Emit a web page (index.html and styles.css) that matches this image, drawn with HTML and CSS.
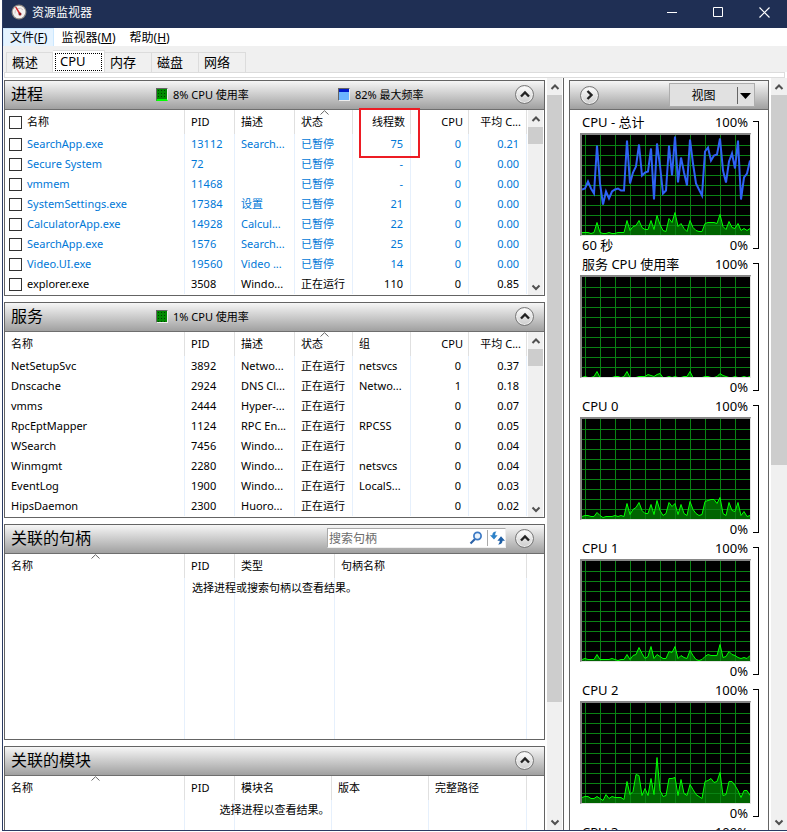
FILE: index.html
```
<!DOCTYPE html>
<html lang="zh-CN">
<head>
  <meta charset="UTF-8" />
  <meta name="viewport" content="width=device-width, initial-scale=1.0"/>
  <title>资源监视器</title>
  <link rel="stylesheet" href="styles.css">
</head>
<body>
  <svg class="defs" width="0" height="0">
    <symbol id="up" viewBox="0 0 10 10"><path d="M1.5 7 5 3.5 8.500 7" fill="none" stroke="#505050" stroke-width="2"/></symbol>
    <symbol id="down" viewBox="0 0 10 10"><path d="M1.500 3.500 5 7 8.500 3.500" fill="none" stroke="#505050" stroke-width="2"/></symbol>
    <symbol id="sort" viewBox="0 0 9 5"><path d="M.5 4.500 4.500.7 8.500 4.500" fill="none" stroke="#666"/></symbol>
    <symbol id="chevron" viewBox="0 0 10 10"><path d="M1 7.500 5 3.500 9 7.500" fill="none" stroke="#222" stroke-width="2.400"/></symbol>
  </svg>

  <div class="window">
    <header class="titlebar">
      <svg class="app-icon" width="16" height="16" viewBox="0 0 16 16">
        <circle cx="8" cy="8" r="7.500" fill="#8c8782"/>
        <circle cx="8" cy="8" r="6.300" fill="#f4f1ef"/>
        <path d="M4 9.500A4.500 4.500 0 0 1 12 6" fill="none" stroke="#cfc6c0"/>
        <path d="M4 3 5.500 3 10 10 8.500 11z" fill="#d2232a"/>
        <circle cx="9" cy="10" r="1.500" fill="#8d1b20"/>
      </svg>
      <h1>资源监视器</h1>
      <div class="window-buttons">
        <button aria-label="最小化"><svg width="11" height="11"><path d="M0 5.500H10" stroke="#fff"/></svg></button>
        <button aria-label="最大化"><svg width="11" height="11"><path d="M.5.5H9.500V9.500H.5z" fill="none" stroke="#fff"/></svg></button>
        <button aria-label="关闭"><svg width="11" height="11"><path d="M.5.5 10.500 10.500M10.500.5.5 10.500" stroke="#fff" stroke-width="1.200"/></svg></button>
      </div>
    </header>

    <nav class="menu">
      <button class="active">文件(<u>F</u>)</button>
      <button>监视器(<u>M</u>)</button>
      <button>帮助(<u>H</u>)</button>
    </nav>

    <div class="tabs" role="tablist">
      <button role="tab">概述</button>
      <button role="tab" class="selected" aria-selected="true"><span>CPU</span></button>
      <button role="tab">内存</button>
      <button role="tab">磁盘</button>
      <button role="tab">网络</button>
    </div>
    <div class="tab-edge"></div>

    <main>
      <div class="panels">
        <section class="panel">
          <div class="panel-header">
            <h2>进程</h2>
            <span class="legend"><i class="swatch green low"></i>8% CPU 使用率</span>
            <span class="legend"><i class="swatch blue"></i>82% 最大频率</span>
            <button class="round" aria-label="折叠"><svg width="10" height="10"><use href="#chevron"/></svg></button>
          </div>
          <div class="list">
            <table>
              <colgroup><col><col class="w50"><col class="w60"><col class="w58"><col class="w58"><col class="w58"><col class="w58"></colgroup>
              <thead>
                <tr><th class="check"><label><input type="checkbox">名称</label></th><th>PID</th><th>描述</th><th>状态<svg class="sort" width="9" height="5"><use href="#sort"/></svg></th><th class="num marked">线程数</th><th class="num">CPU</th><th class="num">平均 C...</th></tr>
              </thead>
              <tbody>
                <tr class="paused"><td class="check"><label><input type="checkbox">SearchApp.exe</label></td><td>13112</td><td>Search...</td><td>已暂停</td><td class="num">75</td><td class="num">0</td><td class="num">0.21</td></tr>
                <tr class="paused"><td class="check"><label><input type="checkbox">Secure System</label></td><td>72</td><td></td><td>已暂停</td><td class="num">-</td><td class="num">0</td><td class="num">0.00</td></tr>
                <tr class="paused"><td class="check"><label><input type="checkbox">vmmem</label></td><td>11468</td><td></td><td>已暂停</td><td class="num">-</td><td class="num">0</td><td class="num">0.00</td></tr>
                <tr class="paused"><td class="check"><label><input type="checkbox">SystemSettings.exe</label></td><td>17384</td><td>设置</td><td>已暂停</td><td class="num">21</td><td class="num">0</td><td class="num">0.00</td></tr>
                <tr class="paused"><td class="check"><label><input type="checkbox">CalculatorApp.exe</label></td><td>14928</td><td>Calcul...</td><td>已暂停</td><td class="num">22</td><td class="num">0</td><td class="num">0.00</td></tr>
                <tr class="paused"><td class="check"><label><input type="checkbox">SearchApp.exe</label></td><td>1576</td><td>Search...</td><td>已暂停</td><td class="num">25</td><td class="num">0</td><td class="num">0.00</td></tr>
                <tr class="paused"><td class="check"><label><input type="checkbox">Video.UI.exe</label></td><td>19560</td><td>Video ...</td><td>已暂停</td><td class="num">14</td><td class="num">0</td><td class="num">0.00</td></tr>
                <tr><td class="check"><label><input type="checkbox">explorer.exe</label></td><td>3508</td><td>Windo...</td><td>正在运行</td><td class="num">110</td><td class="num">0</td><td class="num">0.85</td></tr>
              </tbody>
            </table>
            <div class="scrollbar">
              <button aria-label="向上"><svg width="10" height="10"><use href="#up"/></svg></button>
              <div class="track"><div class="thumb list-thumb"></div></div>
              <button aria-label="向下"><svg width="10" height="10"><use href="#down"/></svg></button>
            </div>
          </div>
        </section>

        <section class="panel">
          <div class="panel-header">
            <h2>服务</h2>
            <span class="legend"><i class="swatch green"></i>1% CPU 使用率</span>
            <button class="round" aria-label="折叠"><svg width="10" height="10"><use href="#chevron"/></svg></button>
          </div>
          <div class="list">
            <table>
              <colgroup><col><col class="w50"><col class="w60"><col class="w58"><col class="w58"><col class="w58"><col class="w58"></colgroup>
              <thead>
                <tr><th>名称</th><th>PID</th><th>描述</th><th>状态<svg class="sort" width="9" height="5"><use href="#sort"/></svg></th><th>组</th><th class="num">CPU</th><th class="num">平均 C...</th></tr>
              </thead>
              <tbody>
                <tr><td>NetSetupSvc</td><td>3892</td><td>Netwo...</td><td>正在运行</td><td>netsvcs</td><td class="num">0</td><td class="num">0.37</td></tr>
                <tr><td>Dnscache</td><td>2924</td><td>DNS Cl...</td><td>正在运行</td><td>Netwo...</td><td class="num">1</td><td class="num">0.18</td></tr>
                <tr><td>vmms</td><td>2444</td><td>Hyper-...</td><td>正在运行</td><td></td><td class="num">0</td><td class="num">0.07</td></tr>
                <tr><td>RpcEptMapper</td><td>1124</td><td>RPC En...</td><td>正在运行</td><td>RPCSS</td><td class="num">0</td><td class="num">0.05</td></tr>
                <tr><td>WSearch</td><td>7456</td><td>Windo...</td><td>正在运行</td><td></td><td class="num">0</td><td class="num">0.04</td></tr>
                <tr><td>Winmgmt</td><td>2280</td><td>Windo...</td><td>正在运行</td><td>netsvcs</td><td class="num">0</td><td class="num">0.04</td></tr>
                <tr><td>EventLog</td><td>1900</td><td>Windo...</td><td>正在运行</td><td>LocalS...</td><td class="num">0</td><td class="num">0.03</td></tr>
                <tr><td>HipsDaemon</td><td>2300</td><td>Huoro...</td><td>正在运行</td><td></td><td class="num">0</td><td class="num">0.02</td></tr>
              </tbody>
            </table>
            <div class="scrollbar">
              <button aria-label="向上"><svg width="10" height="10"><use href="#up"/></svg></button>
              <div class="track"><div class="thumb list-thumb"></div></div>
              <button aria-label="向下"><svg width="10" height="10"><use href="#down"/></svg></button>
            </div>
          </div>
        </section>

        <section class="panel">
          <div class="panel-header">
            <h2>关联的句柄</h2>
            <form class="search">
              <input type="text" placeholder="搜索句柄" aria-label="搜索句柄">
              <button type="button" aria-label="搜索"><svg width="14" height="14" viewBox="0 0 14 14"><path d="M6 8 1.500 12.500" stroke="#2b62a8" stroke-width="2.200"/><circle cx="8.500" cy="5" r="3.600" fill="#eaf3fc" stroke="#3a78c4" stroke-width="1.700"/></svg></button>
              <button type="button" class="refresh" aria-label="刷新"><svg width="15" height="14" viewBox="0 0 15 14"><path d="M6.500.5C3.500.5 2.300 2 2.300 4.300H0L4 8.500 7.600 4.300H5.200C5.200 2.800 5.500 1.500 6.500.5z" fill="#2d82c8"/><path d="M8 13.500C11 13.500 12.500 12 12.500 9.700H15L11 5.300 7.400 9.700H9.800C9.800 11.200 9.200 12.500 8 13.500z" fill="#1f5fa5"/></svg></button>
            </form>
            <button class="round" aria-label="折叠"><svg width="10" height="10"><use href="#chevron"/></svg></button>
          </div>
          <div class="list empty">
            <table>
              <colgroup><col><col class="w50"><col class="w100"><col class="w192"></colgroup>
              <thead>
                <tr><th>名称<svg class="sort" width="9" height="5"><use href="#sort"/></svg></th><th>PID</th><th>类型</th><th>句柄名称</th></tr>
              </thead>
              <tbody><tr><td></td><td></td><td></td><td></td></tr></tbody>
            </table>
            <p>选择进程或搜索句柄以查看结果。</p>
          </div>
        </section>

        <section class="panel">
          <div class="panel-header">
            <h2>关联的模块</h2>
            <button class="round" aria-label="折叠"><svg width="10" height="10"><use href="#chevron"/></svg></button>
          </div>
          <div class="list empty">
            <table>
              <colgroup><col><col class="w50"><col class="w97"><col class="w97"><col class="w98"></colgroup>
              <thead>
                <tr><th>名称<svg class="sort" width="9" height="5"><use href="#sort"/></svg></th><th>PID</th><th>模块名</th><th>版本</th><th>完整路径</th></tr>
              </thead>
              <tbody><tr><td></td><td></td><td></td><td></td><td></td></tr></tbody>
            </table>
            <p>选择进程以查看结果。</p>
          </div>
        </section>
      </div>

      <div class="scrollbar">
        <button aria-label="向上"><svg width="10" height="10"><use href="#up"/></svg></button>
        <div class="track"><div class="thumb panels-thumb"></div></div>
        <button aria-label="向下"><svg width="10" height="10"><use href="#down"/></svg></button>
      </div>

      <aside>
        <div class="panel graphs">
          <div class="panel-header">
            <button class="round right" aria-label="隐藏图表"><svg width="10" height="10"><use href="#chevron"/></svg></button>
            <button class="view"><span>视图</span><svg width="17" height="17"><path d="M.5 0V17" stroke="#666"/><path d="M3 6H14L8.500 12z"/></svg></button>
          </div>
          <div id="charts"></div>
        </div>
        <div class="scrollbar">
          <button aria-label="向上"><svg width="10" height="10"><use href="#up"/></svg></button>
          <div class="track"><div class="thumb graphs-thumb"></div></div>
          <button aria-label="向下"><svg width="10" height="10"><use href="#down"/></svg></button>
        </div>
      </aside>
    </main>
  </div>

  <script src="charts.js"></script>
</body>
</html>
```
FILE: styles.css
```
* {
  box-sizing: border-box;
}
body {
  margin: 0;
  padding-left: 2px;
  background: #fff;
  color: #000;
  font-family: "Noto Sans", "Noto Sans CJK SC", sans-serif;
  font-size: 11px;
}
button, input {
  font-family: inherit;
  color: inherit;
}
button {
  padding: 0;
  border: none;
  background: none;
}
svg {
  display: block;
}
.defs {
  position: absolute;
}
.window {
  display: flex;
  flex-direction: column;
  height: calc(100vh - 1px);
  border-left: 1px solid #2b3b63;
  border-bottom: 1px solid #2b3b63;
  overflow: hidden;
}

/* title bar, menu, tabs */
.titlebar {
  display: flex;
  align-items: center;
  flex: none;
  height: 28px;
  margin-left: -1px;
  padding: 0 0 4px 9px;
  background: #1f2f54;
  color: #fff;
}
.titlebar h1 {
  margin: 0 0 0 5px;
  font-size: 12px;
  font-weight: normal;
}
.window-buttons {
  display: flex;
  margin-left: auto;
}
.window-buttons button {
  display: flex;
  align-items: center;
  justify-content: center;
  width: 46px;
  height: 24px;
}
.menu {
  display: flex;
  flex: none;
  height: 18px;
}
.menu button {
  height: 19px;
  padding: 0 6px;
  border: 1px solid transparent;
  font-size: 12px;
  line-height: 17px;
}
.menu .active {
  background: #e5f3ff;
  border-color: #cce8ff;
}
.tabs {
  display: flex;
  align-items: flex-end;
  flex: none;
  height: 26px;
  padding-left: 3px;
  background: #f0f0f0;
}
.tabs button {
  height: 20px;
  padding: 0 9px 0 5px;
  min-width: 47px;
  border: 1px solid #dcdcdc;
  border-left: none;
  border-bottom: none;
  font-size: 13px;
  line-height: 17px;
  text-align: left;
}
.tabs button:first-child {
  border-left: 1px solid #dcdcdc;
}
.tabs .selected {
  width: 52px;
  height: 22px;
  padding: 2px;
  background: #fff;
}
.tabs .selected span {
  display: block;
  height: 18px;
  padding-left: 4px;
  border: 1px dotted #000;
  line-height: 14px;
}
.tab-edge {
  flex: none;
  height: 6px;
  margin: 0 2px 0 1px;
  border: 1px solid #dcdcdc;
}

/* layout */
main {
  display: flex;
  flex: 1;
  min-height: 0;
}
.panels {
  display: flex;
  flex-direction: column;
  flex: 1;
  gap: 6px;
  min-width: 0;
  padding: 2px 2px 0 1px;
  overflow: hidden;
}
aside {
  display: flex;
  flex: none;
  gap: 2px;
  width: 224px;
  margin-left: 1px;
  padding-left: 5px;
  border-left: 1px solid #646464;
}
.panel {
  flex: none;
  border: 1px solid #646464;
  background: #fff;
}
.panel-header {
  display: flex;
  align-items: center;
  height: 29px;
  padding: 0 10px 2px 6px;
  background: linear-gradient(#f6f6f6, #a0a0a0);
  border-bottom: 1px solid #6e6e6e;
}
.panel-header h2 {
  flex: 0 0 145px;
  margin: 0;
  font-size: 16px;
  font-weight: normal;
  line-height: 24px;
}
.legend {
  display: flex;
  align-items: center;
  flex: 0 0 182px;
  gap: 5px;
}
.legend + .legend {
  flex: none;
}
.swatch {
  width: 12px;
  height: 13px;
  border: 1px solid #646464;
  border-right-color: #eee;
  border-bottom-color: #eee;
}
.green {
  background-color: #008a00;
  background-image: radial-gradient(#003c00 30%, transparent 40%);
  background-size: 3px 3px;
}
.low {
  border-bottom: 2px solid #0f0;
}
.blue {
  background: linear-gradient(#0018c8 3px, #6cb4ff 3px);
}
.round {
  display: flex;
  align-items: center;
  justify-content: center;
  flex: none;
  width: 19px;
  height: 19px;
  margin-left: auto;
  border: 1px solid #777;
  border-radius: 50%;
  background: linear-gradient(#fff, #ccc);
  box-shadow: inset 0 0 0 1px #eee;
}

/* lists */
.list {
  display: flex;
  position: relative;
  height: 185px;
}
table {
  flex: 1;
  width: 100%;
  table-layout: fixed;
  border-collapse: collapse;
  align-self: flex-start;
}
.w50 { width: 50px; }
.w58 { width: 58px; }
.w60 { width: 60px; }
.w97 { width: 97px; }
.w98 { width: 98px; }
.w100 { width: 100px; }
.w192 { width: 192px; }
th, td {
  height: 20px;
  padding: 0 6px;
  box-shadow: inset -1px 0 #e6f0fc;
  font-weight: normal;
  line-height: 20px;
  text-align: left;
  white-space: nowrap;
}
td {
  overflow: hidden;
}
th {
  position: relative;
  height: 24px;
  line-height: 24px;
  box-shadow: inset -1px 0 #e0e0e0;
}
.num {
  text-align: right;
}
td.num {
  padding-right: 8px;
}
.check {
  padding-left: 4px;
}
.check label {
  display: flex;
  align-items: center;
  gap: 5px;
}
.check input {
  appearance: none;
  width: 13px;
  height: 13px;
  margin: 0;
  border: 1px solid #333;
  background: #fff;
}
.paused {
  color: #0078d7;
}
.sort {
  position: absolute;
  top: 0;
  left: calc(50% - 4px);
}
.marked::after {
  content: "";
  position: absolute;
  z-index: 1;
  top: -2px;
  left: 6px;
  right: -9px;
  height: 46px;
  border: 2px solid #ed1c24;
}
.empty {
  padding-right: 17px;
}
.empty td {
  height: 161px;
}
.empty p {
  position: absolute;
  top: 24px;
  left: 0;
  right: 0;
  margin: 0;
  line-height: 20px;
  text-align: center;
}
.search {
  display: flex;
  align-items: center;
  width: 179px;
  height: 20px;
  margin-left: auto;
  border: 1px solid #aaa;
  border-right-color: #eee;
  border-bottom-color: #eee;
  background: #fff;
}
.search input {
  flex: 1;
  min-width: 0;
  height: 18px;
  padding: 0 1px;
  border: none;
  background: none;
  font-size: 12px;
}
.search input::placeholder {
  color: #6d6d6d;
}
.search button {
  padding-right: 4px;
}
.search .refresh {
  padding: 1px 0 1px 2px;
  border-left: 1px solid #aaa;
}
.search + .round {
  margin-left: 9px;
}

/* scrollbars */
.scrollbar {
  display: flex;
  flex-direction: column;
  flex: none;
  width: 15px;
  margin-left: 1px;
  background: #f0f0f0;
}
.list .scrollbar {
  margin-right: 1px;
}
main > .scrollbar {
  margin-left: 0;
}
aside .scrollbar {
  width: 16px;
  margin-left: 0;
}
.scrollbar button {
  display: flex;
  align-items: center;
  justify-content: center;
  flex: none;
  height: 17px;
}
.track {
  flex: 1;
}
.thumb {
  background: #cdcdcd;
}
.list-thumb { height: 17px; }
.panels-thumb { height: 84.5%; }
.graphs-thumb { height: 51.5%; }

/* graphs */
.graphs {
  flex: 1;
  margin-top: 2px;
  border-bottom: none;
  overflow: hidden;
}
.graphs .panel-header {
  padding: 0 13px 0 10px;
}
.right {
  margin-left: 0;
}
.right svg {
  transform: rotate(90deg);
}
.view {
  display: flex;
  align-items: center;
  width: 86px;
  height: 24px;
  margin-left: auto;
  border: 1px solid #adadad;
  background: #e1e1e1;
  font-size: 12px;
}
.view span {
  flex: 1;
}
#charts {
  padding: 2px 9px 0 10px;
}
.chart {
  display: grid;
  grid-template-columns: 1fr 6px;
  column-gap: 2px;
  height: 142px;
}
.chart-label {
  display: flex;
  justify-content: space-between;
  height: 21px;
  padding: 0 3px 0 2px;
  font-size: 13px;
  line-height: 20px;
}
.chart-label.bottom {
  height: 18px;
  line-height: 18px;
}
.plot {
  height: 103px;
  border: 1px solid #e3e3e3;
  border-top: 2px solid #868686;
  border-left: 2px solid #868686;
  background: #000;
}
.plot svg {
  width: 100%;
  height: 100px;
}
.bracket {
  height: 128px;
  margin-top: 9px;
  border: 1px solid #000;
  border-left: none;
}
```
FILE: charts.js
```
const charts = [
  {
    title: 'CPU - 总计',
    time: '60 秒',
    usage: [3,3,3,2,3,13,3,2,2,3,2,2,3,3,3,15,5,9,10,15,8,6,6,15,6,20,11,5,4,17,13,23,9,12,7,4,15,8,5,4,4,12,13,13,13,12,21,9,6,14,8,7,12,5,7,5,7],
    frequency: [46,47,54,47,42,90,52,31,44,37,44,46,47,45,45,95,52,63,69,91,60,63,64,87,36,92,70,42,45,90,60,99,53,78,63,50,96,72,52,46,40,84,88,75,80,81,97,65,53,74,82,67,95,36,58,62,75]
  },
  {
    title: '服务 CPU 使用率',
    usage: [0,1,0,0,1,6,0,0,0,0,0,1,1,0,1,6,0,0,0,1,1,1,3,2,1,3,4,0,0,1,0,1,0,0,1,1,6,0,0,0,0,1,1,0,0,1,4,2,1,0,0,1,0,0,1,0,1]
  },
  {
    title: 'CPU 0',
    usage: [3,4,4,3,3,7,4,2,3,3,3,4,3,4,3,16,5,10,12,17,9,6,6,15,5,19,9,4,6,17,13,16,5,15,6,4,18,10,6,4,5,18,19,20,20,16,22,6,4,17,9,8,17,4,8,3,4]
  },
  {
    title: 'CPU 1',
    usage: [2,3,2,2,2,7,2,2,2,2,3,2,1,2,2,7,2,6,7,14,8,3,5,15,3,7,5,3,3,10,9,15,3,6,4,3,11,6,2,1,2,5,7,6,6,6,17,4,5,10,7,6,4,3,4,3,6]
  },
  {
    title: 'CPU 2',
    usage: [6,7,7,5,5,7,5,3,9,5,7,6,6,6,4,22,9,12,29,28,8,15,8,25,9,46,13,7,8,25,25,26,8,24,10,8,19,14,9,7,5,22,23,25,21,22,31,8,9,22,22,18,13,6,13,13,8]
  },
  { title: 'CPU 3', usage: [4,4,4] }
];

function toPoints(values) {
  return values.map((v, i) => (i * 3) + ',' + (100.5 - v)).join(' ');
}

function grid() {
  let d = '';
  for (let x = 3.5; x < 168; x += 15) d += 'M' + x + ' 0V100';
  for (let y = 10.5; y < 100; y += 10) d += 'M0 ' + y + 'H168';
  return d;
}

document.getElementById('charts').innerHTML = charts.map(c => {
  const usage = toPoints(c.usage);
  const end = (c.usage.length - 1) * 3;
  const line = c.frequency
    ? '<polyline points="' + toPoints(c.frequency) + '" fill="none" stroke="#2f62f5" stroke-width="2"/>'
    : '';
  return `
    <div class="chart">
      <div>
        <div class="chart-label"><span>${c.title}</span><span>100%</span></div>
        <div class="plot">
          <svg viewBox="0 0 168 100" preserveAspectRatio="none">
            <polygon points="0,101 ${usage} ${end},101" fill="#006400"/>
            <path d="${grid()}" stroke="#0a8214"/>
            <polyline points="${usage}" fill="none" stroke="#00ff00"/>
            ${line}
          </svg>
        </div>
        <div class="chart-label bottom"><span>${c.time || ''}</span><span>0%</span></div>
      </div>
      <div class="bracket"></div>
    </div>`;
}).join('');
```
